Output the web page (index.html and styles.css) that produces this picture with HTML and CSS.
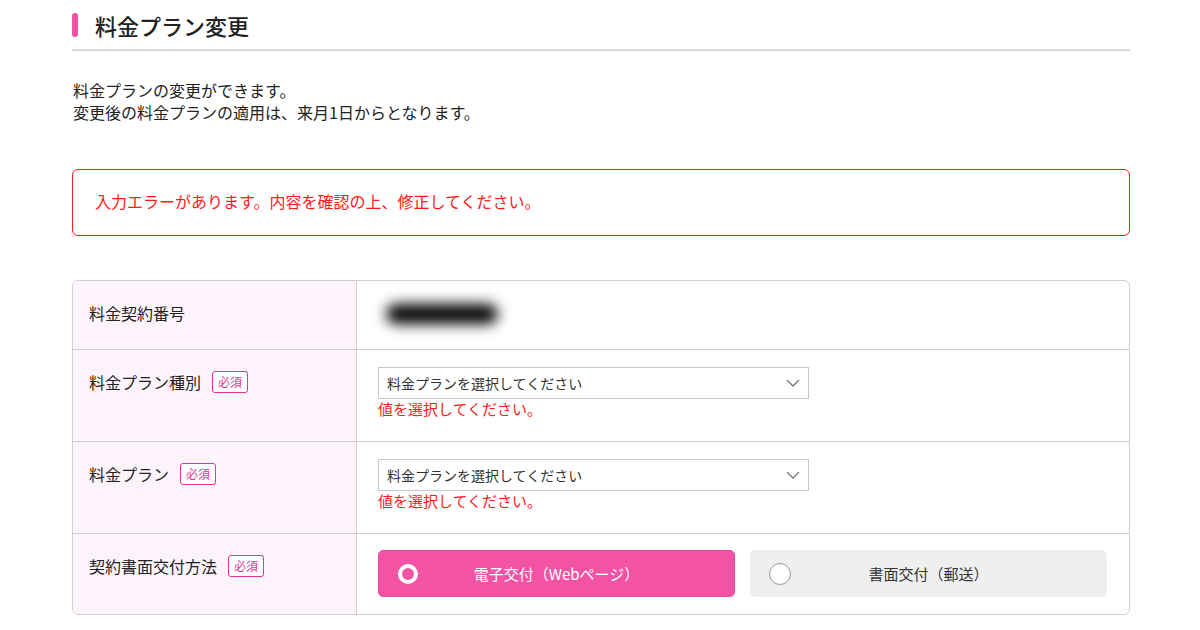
FILE: index.html
```html
<!DOCTYPE html>
<html lang="ja">
<head>
<meta charset="utf-8">
<title>料金プラン変更</title>
<link rel="stylesheet" href="styles.css">
</head>
<body>
<main class="page">
  <h1 class="heading"><span class="heading-bar"></span><span class="heading-text">料金プラン変更</span></h1>

  <div class="lead"><p class="lead-line">料金プランの変更ができます。</p><p class="lead-line">変更後の料金プランの適用は、来月1日からとなります。</p></div>

  <div class="alert">入力エラーがあります。内容を確認の上、修正してください。</div>

  <div class="form-table">
    <div class="row">
      <div class="th"><span class="label">料金契約番号</span></div>
      <div class="td td-center"><span class="blurred"></span></div>
    </div>
    <div class="row">
      <div class="th"><span class="label">料金プラン種別</span><span class="badge">必須</span></div>
      <div class="td">
        <div class="select"><span>料金プランを選択してください</span>
          <svg class="chev" width="14" height="8" viewBox="0 0 14 8"><path d="M1 1 L7 7 L13 1" fill="none" stroke="#777" stroke-width="1.3"/></svg>
        </div>
        <div class="field-error">値を選択してください。</div>
      </div>
    </div>
    <div class="row">
      <div class="th"><span class="label">料金プラン</span><span class="badge">必須</span></div>
      <div class="td">
        <div class="select"><span>料金プランを選択してください</span>
          <svg class="chev" width="14" height="8" viewBox="0 0 14 8"><path d="M1 1 L7 7 L13 1" fill="none" stroke="#777" stroke-width="1.3"/></svg>
        </div>
        <div class="field-error">値を選択してください。</div>
      </div>
    </div>
    <div class="row">
      <div class="th"><span class="label">契約書面交付方法</span><span class="badge">必須</span></div>
      <div class="td td-choices">
        <div class="choices">
          <div class="choice choice-on"><span class="radio radio-on"></span><span class="choice-text">電子交付（Webページ）</span></div>
          <div class="choice choice-off"><span class="radio radio-off"></span><span class="choice-text">書面交付（郵送）</span></div>
        </div>
      </div>
    </div>
  </div>
</main>
</body>
</html>
```

FILE: styles.css
```css
* { box-sizing: border-box; }
html, body { margin: 0; padding: 0; background: #fff; }
body {
  font-family: "Hiragino Kaku Gothic ProN", "Noto Sans CJK JP", "Noto Sans", sans-serif;
  color: #222;
}
.page {
  width: 1058px;
  margin: 0 0 0 72px;
}
.heading {
  display: flex;
  align-items: center;
  margin: 0;
  padding: 12px 0 11px;
  border-bottom: 2px solid #d9d9d9;
  font-size: 22px;
  font-weight: 500;
  line-height: 26px;
}
.heading-bar {
  width: 6px;
  height: 24px;
  border-radius: 3px;
  background: #f052a2;
  margin-right: 17px;
}
.lead {
  margin: 28px 0 0 1px;
  font-size: 16px;
  line-height: 22px;
}
.lead-line { margin: 0; }
.alert {
  margin-top: 46px;
  border: 1px solid #ff1a1a;
  border-radius: 6px;
  padding: 20px 22px 23px;
  color: #ff1a1a;
  font-size: 16px;
  line-height: 22px;
}
.form-table {
  margin-top: 44px;
  border: 1px solid #cfcfcf;
  border-radius: 6px;
  overflow: hidden;
}
.row {
  display: grid;
  grid-template-columns: 284px 1fr;
}
.row + .row { border-top: 1px solid #cfcfcf; }
.th {
  background: #fdf3fa;
  border-right: 1px solid #cfcfcf;
  padding: 20px 16px;
  display: flex;
  align-items: flex-start;
  font-size: 16px;
  line-height: 24px;
}
.badge {
  display: inline-flex;
  align-items: center;
  justify-content: center;
  width: 36px;
  height: 22px;
  margin-left: 11px;
  margin-top: 1px;
  border: 1.5px solid #e6358f;
  border-radius: 3px;
  background: #fff;
  color: #e6358f;
  font-size: 12px;
  line-height: 1;
}
.td {
  padding: 17px 22px 22px 21px;
}
.td-center {
  display: flex;
  align-items: center;
  height: 68px;
  padding: 0 0 0 21px;
}
.blurred {
  display: block;
  width: 112px;
  height: 20px;
  margin-left: 8px;
  margin-top: -2px;
  border-radius: 10px;
  background: #000;
  filter: blur(7px);
}
.select {
  width: 431px;
  height: 32px;
  border: 1px solid #c8c8c8;
  background: #fff;
  display: flex;
  align-items: center;
  justify-content: space-between;
  padding: 0 8px 0 8px;
  font-size: 14px;
  color: #333;
}
.field-error {
  color: #ff1a1a;
  font-size: 15px;
  line-height: 20px;
}
.td-choices {
  padding: 16px 22px 17px 21px;
}
.choices {
  display: grid;
  grid-template-columns: 1fr 1fr;
  gap: 15px;
}
.choice {
  height: 47px;
  border-radius: 5px;
  display: grid;
  grid-template-columns: 1fr auto 1fr;
  align-items: center;
  font-size: 15px;
}
.choice-on {
  background: #f253a4;
  border: 1px solid #ea4a9b;
  color: #fff;
}
.choice-off {
  background: #efefef;
  color: #333;
}
.choice-text { grid-column: 2; }
.radio {
  grid-column: 1;
  grid-row: 1;
  justify-self: start;
  border-radius: 50%;
}
.radio-on {
  width: 20px;
  height: 20px;
  margin-left: 19px;
  border: 4px solid #fff;
}
.radio-off {
  width: 22px;
  height: 22px;
  margin-left: 19px;
  border: 1.5px solid #999;
  background: #fff;
}
```
